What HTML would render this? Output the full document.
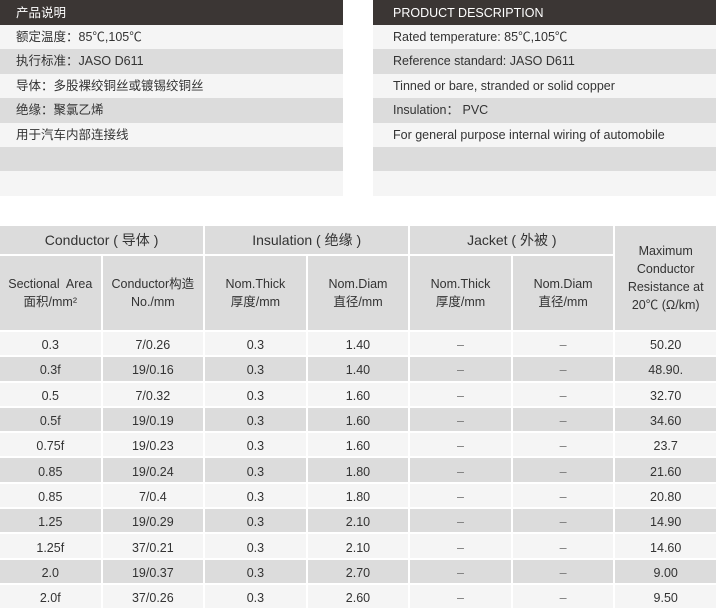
<!DOCTYPE html>
<html><head><meta charset="utf-8"><style>
body{margin:0;width:716px;height:608px;overflow:hidden;background:#fff;font-family:"Liberation Sans","Noto Sans CJK SC",sans-serif;color:#333;position:relative}
.p{position:absolute;top:0;width:343px}
.p div{height:24.4px;line-height:24px;padding-left:16px;font-size:12.5px;box-sizing:border-box}
.p .h{background:#3b3634;color:#fff;font-size:12.5px;height:25px;line-height:26px}
.p .a{background:#f5f5f5}.p .b{background:#dcdcdc}
table{position:absolute;top:224px;left:-2px;width:720px;border-collapse:separate;border-spacing:2px;table-layout:fixed}
td{text-align:center;font-size:12.5px;padding:0;background:#f5f5f5}
tr.g td{background:#dcdcdc}
tr.d td{height:23.3px;padding-top:3px;box-sizing:border-box}
.hd td{background:#dcdcdc}
.h1 td{height:28px;font-size:14px}
.h2 td{height:74px;line-height:18px;font-size:12.5px}
.x{color:#777}
</style></head><body>
<div class="p" style="left:0">
<div class="h">产品说明</div>
<div class="a">额定温度：85℃,105℃</div>
<div class="b">执行标准：JASO D611</div>
<div class="a">导体：多股裸绞铜丝或镀锡绞铜丝</div>
<div class="b">绝缘：聚氯乙烯</div>
<div class="a">用于汽车内部连接线</div>
<div class="b"></div>
<div class="a"></div>
</div>
<div class="p" style="left:373px">
<div class="h" style="padding-left:20px">PRODUCT DESCRIPTION</div>
<div class="a" style="padding-left:20px">Rated temperature: 85℃,105℃</div>
<div class="b" style="padding-left:20px">Reference standard: JASO D611</div>
<div class="a" style="padding-left:20px">Tinned or bare, stranded or solid copper</div>
<div class="b" style="padding-left:20px">Insulation： PVC</div>
<div class="a" style="padding-left:20px">For general purpose internal wiring of automobile</div>
<div class="b"></div>
<div class="a"></div>
</div>
<table>
<tr class="hd h1"><td colspan="2">Conductor ( 导体 )</td><td colspan="2">Insulation ( 绝缘 )</td><td colspan="2">Jacket ( 外被 )</td><td rowspan="2" style="line-height:18px;font-size:12.5px">Maximum<br>Conductor<br>Resistance at<br>20℃ (Ω/km)</td></tr>
<tr class="hd h2"><td>Sectional&nbsp; Area<br>面积/mm²</td><td>Conductor构造<br>No./mm</td><td>Nom.Thick<br>厚度/mm</td><td>Nom.Diam<br>直径/mm</td><td>Nom.Thick<br>厚度/mm</td><td>Nom.Diam<br>直径/mm</td></tr>
<tr class="d"><td>0.3</td><td>7/0.26</td><td>0.3</td><td>1.40</td><td class="x">–</td><td class="x">–</td><td>50.20</td></tr>
<tr class="d g"><td>0.3f</td><td>19/0.16</td><td>0.3</td><td>1.40</td><td class="x">–</td><td class="x">–</td><td>48.90.</td></tr>
<tr class="d"><td>0.5</td><td>7/0.32</td><td>0.3</td><td>1.60</td><td class="x">–</td><td class="x">–</td><td>32.70</td></tr>
<tr class="d g"><td>0.5f</td><td>19/0.19</td><td>0.3</td><td>1.60</td><td class="x">–</td><td class="x">–</td><td>34.60</td></tr>
<tr class="d"><td>0.75f</td><td>19/0.23</td><td>0.3</td><td>1.60</td><td class="x">–</td><td class="x">–</td><td>23.7</td></tr>
<tr class="d g"><td>0.85</td><td>19/0.24</td><td>0.3</td><td>1.80</td><td class="x">–</td><td class="x">–</td><td>21.60</td></tr>
<tr class="d"><td>0.85</td><td>7/0.4</td><td>0.3</td><td>1.80</td><td class="x">–</td><td class="x">–</td><td>20.80</td></tr>
<tr class="d g"><td>1.25</td><td>19/0.29</td><td>0.3</td><td>2.10</td><td class="x">–</td><td class="x">–</td><td>14.90</td></tr>
<tr class="d"><td>1.25f</td><td>37/0.21</td><td>0.3</td><td>2.10</td><td class="x">–</td><td class="x">–</td><td>14.60</td></tr>
<tr class="d g"><td>2.0</td><td>19/0.37</td><td>0.3</td><td>2.70</td><td class="x">–</td><td class="x">–</td><td>9.00</td></tr>
<tr class="d"><td>2.0f</td><td>37/0.26</td><td>0.3</td><td>2.60</td><td class="x">–</td><td class="x">–</td><td>9.50</td></tr>
</table>
</body></html>
